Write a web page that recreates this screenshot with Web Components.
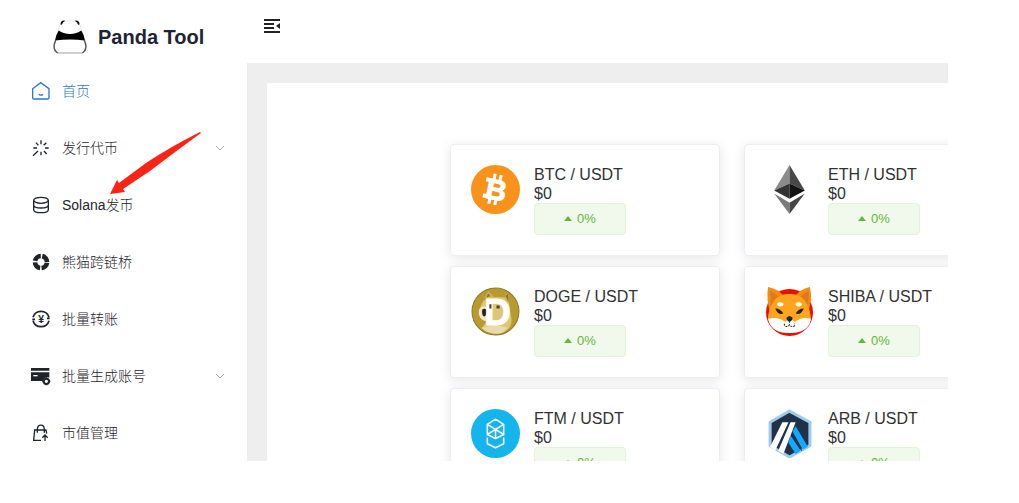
<!DOCTYPE html>
<html lang="zh-CN">

<head>
  <meta charset="utf-8">
  <title>Panda Tool</title>
  <style>
    body {
      margin: 0;
      background: #fff;
      color: #303133;
      font-family: "Liberation Sans", "Noto Sans CJK SC", sans-serif;
    }
  </style>
</head>

<body>

  <panda-app>
    <side-bar slot="side">
      <menu-item icon="home" active>首页</menu-item>
      <menu-item icon="issue" submenu>发行代币</menu-item>
      <menu-item icon="coins">Solana发币</menu-item>
      <menu-item icon="bridge">熊猫跨链桥</menu-item>
      <menu-item icon="transfer">批量转账</menu-item>
      <menu-item icon="account" submenu>批量生成账号</menu-item>
      <menu-item icon="market">市值管理</menu-item>
    </side-bar>
    <top-bar slot="top"></top-bar>
    <price-card coin="btc" pair="BTC / USDT"></price-card>
    <price-card coin="eth" pair="ETH / USDT"></price-card>
    <price-card coin="doge" pair="DOGE / USDT"></price-card>
    <price-card coin="shiba" pair="SHIBA / USDT"></price-card>
    <price-card coin="ftm" pair="FTM / USDT"></price-card>
    <price-card coin="arb" pair="ARB / USDT"></price-card>
    <pointer-arrow slot="overlay"></pointer-arrow>
  </panda-app>

  <script>

    // Menu icons, all on a 54 x 54 grid
    const menuIcons = {
      home: `<path d="M2 20 L26 2 L51 20 V47 q0 4 -4 4 H6 q-4 0 -4 -4z M20 37 q6 5 13 0"/>`,
      issue: `<path stroke-width="4" d="M27 4v12 M27 38v11 M4 27h11 M39 27h11 M12 11l7 8 M43 11l-8 8 M36 36l8 9 M18 36L3 50"/>`,
      coins: `<g stroke-width="4"><ellipse cx="27" cy="13" rx="22" ry="9"/>
        <path d="M5 13v28c0 12 44 12 44 0V13 M5 27c0 12 44 12 44 0"/></g>`,
      bridge: `<circle cx="27" cy="27" r="18" stroke-width="14" pathLength="100" stroke-dasharray="21 4" stroke-dashoffset="-2"/>`,
      transfer: `<path stroke-width="5" d="M3 22 A25 25 0 0 1 51 22 M51 32 A25 25 0 0 1 3 32 M1 28h8 M45 25h8"/>
        <text x="27" y="38" text-anchor="middle" font-size="31" font-weight="bold" fill="currentColor" stroke="none">¥</text>`,
      account: `<path fill="currentColor" stroke="none" d="M-3 3h55v8H-3z M-3 16h55v16a15 15 0 0 0-20 10H-3z"/>
        <path stroke="#fff" stroke-width="4" d="M4 26h13"/>
        <circle cx="43" cy="43" r="8" stroke-width="6"/>
        <path stroke-width="5" d="M43 31v4 M43 51v4 M31 43h4 M51 43h4"/>`,
      market: `<path stroke-width="4" d="M27 49H5 L8 18H42l2 11 M16 26v-9c0-18 21-18 21 0v9 M39 51V34 M31 41l8-8l8 8"/>`
    }

    // Coin logos, 48 x 48
    const coinLogos = {
      btc: `<circle cx="24" cy="24" r="24" fill="#f7931a"/>
        <g transform="rotate(12 24 24)" fill="#fff">
          <text x="25" y="34" text-anchor="middle" font-size="28" font-weight="bold" stroke="#fff" stroke-width="1">B</text>
          <path d="M19 9h3v7h-3z M25 9h3v7h-3z M19 32h3v7h-3z M25 32h3v7h-3z M13 14h7v4h-7z M13 30h7v4h-7z"/>
        </g>`,
      eth: `<path fill="#8b8b8b" d="M24 0L9 25l15-7z"/>
        <path fill="#484848" d="M24 0l15 25l-15-7z"/>
        <path fill="#343434" d="M24 18L9 25l15 8z"/>
        <path fill="#121212" d="M24 18l15 7l-15 8z"/>
        <path fill="#7b7b7b" d="M9 28l15 9v11z"/>
        <path fill="#454545" d="M39 28l-15 9v11z"/>`,
      doge: `<circle cx="24" cy="24" r="23" fill="#b79b2e" stroke="#8f7829" stroke-width="1"/>
        <path fill="#cdb25a" d="M13 11l4-7l6 6z M32 11l4-6l2 14z"/>
        <path fill="#92732c" d="M34 9l2-3l1 9z M15 10l2-4l2 3z"/>
        <path fill="#dcc67e" d="M12 14l5-4h15l5 6l2 12c2 7 0 12-6 16c-7 3-16 2-22-4l4-6c-7-4-8-13-3-20z"/>
        <path fill="#efe6cf" d="M8 22c3-5 8-4 9 2v9c-6 2-11-5-9-11z"/>
        <path fill="#2c2416" d="M11 22c3-2 5 0 4 4c-1 5-5 3-4-4z"/>
        <path fill="#e9dca9" d="M10 40l13-3l13 3l-6 5c-7 2-15 0-20-5z"/>
        <text x="26" y="37" text-anchor="middle" font-size="36" font-weight="bold" fill="#fffdf5" stroke="#fffdf5" stroke-width="1">D</text>
        <path fill="#4a3d22" d="M18 17h2v4h-2z M25 18h3v3h-3z"/>`,
      shiba: `<circle cx="24" cy="25" r="23" fill="#e80f05"/>
        <path fill="#f48b12" d="M3 0q11 2 16 10L5 25Q1 12 3 0z M44 0q-10 2-15 10l13 15q5-12 2-25z"/>
        <path fill="#e07a18" d="M5 4q7 3 10 8l-9 8z M43 4q-7 3-10 8l9 8z"/>
        <path fill="#ffa51d" d="M24 7c13-1 20 10 21 24c-2 11-11 14-21 14S5 42 3 31C4 17 11 6 24 7z"/>
        <path fill="#fff" d="M3 31c9-2 13 1 17 3l4-4l5 4c4-2 8-5 16-3c-1 10-10 14-21 14S5 41 3 31z"/>
        <ellipse cx="15" cy="17" rx="3" ry="2" fill="#fff"/>
        <ellipse cx="33" cy="17" rx="3" ry="2" fill="#fff"/>
        <path fill="#252321" d="M10 21q5 0 8 5q-5 2-8-5z M38 21q-5 0-8 5q5 2 8-5z M21 30q3-3 6 0q0 3-3 4q-3-1-3-4z"/>
        <path fill="none" stroke="#252321" stroke-width="1" stroke-dasharray="2 1" d="M24 33v3 M19 36v2q3 2 5-1q2 3 5 1v-2"/>`,
      ftm: `<circle cx="24" cy="24" r="24" fill="#13b5ec"/>
        <path fill="none" stroke="#fff" stroke-width="1.5" stroke-linejoin="round" d="M16 26V15l8-5l8 5v11 M16 28v6l8 4l8-4v-6 M16 15l8 5l8-5 M16 15l16 10l-8 4l-8-4l16-10 M24 20v9"/>`,
      arb: `<path fill="#213147" stroke="#9dcced" stroke-width="3" stroke-linejoin="round" d="M24 2l20 11v23L24 47L5 36V13z"/>
        <path fill="#12aaff" d="M27 22l3-5l12 20l-5 3z M25 26l10 15l-5 3l-7-11z"/>
        <path stroke="#213147" stroke-width="1" d="M26 24l10 17"/>
        <path fill="#fff" d="M17 13h6L10 41l-5-4z M25 13h5L18 44l-5-3z"/>`
    }

    class PandaApp extends HTMLElement {
      constructor() {
        super();
        this.attachShadow({ mode: "open" }).innerHTML = `
          <style>
            :host {
              display: flex;
              position: relative;
              height: calc(100vh - 42px);
              margin-right: 71px;
              overflow: hidden;
            }

            .content {
              flex: 1;
              min-width: 0;
              display: flex;
              flex-direction: column;
            }

            main {
              flex: 1;
              min-height: 0;
              padding: 20px 0 0 20px;
              background: #eee;
              overflow: hidden;
            }

            .panel {
              display: grid;
              grid-template-columns: repeat(2, 270px);
              gap: 10px 24px;
              padding: 61px 0 20px 183px;
              background: #fff;
              overflow: hidden;
            }
          </style>
          <slot name="side"></slot>
          <div class="content">
            <slot name="top"></slot>
            <main>
              <section class="panel"><slot></slot></section>
            </main>
          </div>
          <slot name="overlay"></slot>
        `;
      }
    }

    class SideBar extends HTMLElement {
      constructor() {
        super();
        this.attachShadow({ mode: "open" }).innerHTML = `
          <style>
            :host {
              display: flex;
              flex-direction: column;
              flex: none;
              width: 247px;
              overflow: hidden;
              background: #fff;
            }

            .logo {
              box-sizing: border-box;
              display: flex;
              flex: none;
              align-items: center;
              gap: 11px;
              height: 62px;
              padding: 12px 0 0 53px;
              color: #1d2433;
            }

            h1 {
              margin: 0;
              font-size: 20px;
              line-height: 24px;
            }

            nav {
              flex: none;
            }

            .more {
              flex: none;
              width: 6px;
              height: 2px;
              margin: auto 0 0 15px;
              border-radius: 3px 3px 0 0;
              background: #999;
            }
          </style>
          <div class="logo">
            <svg width="34" height="34" viewBox="0 0 100 100" aria-hidden="true">
              <path fill="#fff" stroke="#ddd" stroke-width="2" d="M24 8Q50-4 76 8Q84 24 90 50Q106 78 88 97H12Q-6 78 10 50Q16 24 24 8z"/>
              <path fill="none" stroke="#555" stroke-width="4" d="M8 60Q-4 86 14 97 M92 60Q104 86 86 97"/>
              <path fill="none" stroke="#aaa" stroke-width="3" d="M14 97H86"/>
              <path fill="#111" d="M22 13Q22 0 36 2Q29 5 26 14z M78 13Q78 0 64 2Q71 5 74 14z"/>
              <path fill="#000" d="M17 31Q30 41 50 41T83 31Q92 44 94 60Q50 55 6 60Q8 44 17 31z"/>
            </svg>
            <h1>Panda Tool</h1>
          </div>
          <nav><slot></slot></nav>
          <div class="more"></div>
        `;
      }
    }

    class MenuItem extends HTMLElement {
      constructor() {
        super();
        const submenu = this.hasAttribute("submenu");
        const tag = submenu ? `button type="button" aria-expanded="false"` : `a href="#"`;
        const chevron = `<svg class="chevron" width="10" height="6" viewBox="0 0 10 6"><path d="M1 1l4 4l4-4"/></svg>`;
        this.attachShadow({ mode: "open" }).innerHTML = `
          <style>
            :host {
              display: block;
            }

            a,
            button {
              box-sizing: border-box;
              display: flex;
              align-items: center;
              gap: 12px;
              width: 100%;
              height: 57px;
              padding: 0 22px 0 32px;
              border: 0;
              background: none;
              color: #1f242b;
              font: inherit;
              font-size: 14px;
              font-weight: 300;
              text-align: left;
              text-decoration: none;
              cursor: pointer;
            }

            :host([active]) a {
              color: #2a78d0;
            }

            span {
              padding-bottom: 2px;
            }

            svg {
              flex: none;
              fill: none;
              stroke: currentColor;
              overflow: visible;
            }

            .chevron {
              margin-left: auto;
              stroke: #aaa;
              stroke-width: 1;
            }
          </style>
          <${tag}>
            <svg width="18" height="18" viewBox="0 0 54 54" stroke-width="4" aria-hidden="true">${menuIcons[this.getAttribute("icon")]}</svg>
            <span><slot></slot></span>
            ${submenu ? chevron : ""}
          </${submenu ? "button" : "a"}>
        `;
      }
    }

    class TopBar extends HTMLElement {
      constructor() {
        super();
        this.attachShadow({ mode: "open" }).innerHTML = `
          <style>
            :host {
              box-sizing: border-box;
              display: flex;
              align-items: flex-start;
              height: 63px;
              padding: 17px 16px;
              background: #fff;
            }

            button {
              display: flex;
              padding: 0;
              border: 0;
              background: none;
              color: #222;
              cursor: pointer;
            }
          </style>
          <button type="button" aria-label="收起菜单">
            <svg width="18" height="18" viewBox="0 0 18 18" fill="currentColor">
              <path d="M1 2h16v2H1z M1 6h10v2H1z M1 10h10v2H1z M1 14h16v2H1z M17 6v6l-4-3z"/>
            </svg>
          </button>
        `;
      }
    }

    class PriceCard extends HTMLElement {
      constructor() {
        super();
        this.attachShadow({ mode: "open" }).innerHTML = `
          <style>
            :host {
              display: flex;
              align-items: flex-start;
              gap: 14px;
              padding: 20px;
              border: 1px solid #ebeef5;
              border-radius: 4px;
              background: #fff;
              box-shadow: 0 2px 12px rgba(0, 0, 0, 0.1);
            }

            svg {
              flex: none;
            }

            h2,
            p {
              margin: 0;
              font-size: 16px;
              font-weight: normal;
              line-height: 19px;
            }

            button {
              box-sizing: border-box;
              display: flex;
              align-items: center;
              justify-content: center;
              gap: 5px;
              width: 92px;
              height: 32px;
              padding: 0 0 2px;
              border: 1px solid #e1f3d8;
              border-radius: 4px;
              background: #f0f9eb;
              color: #67b53f;
              font: inherit;
              font-size: 13px;
            }
          </style>
          <svg width="49" height="49" viewBox="0 0 48 48" aria-hidden="true">${coinLogos[this.getAttribute("coin")]}</svg>
          <div>
            <h2>${this.getAttribute("pair")}</h2>
            <p>$0</p>
            <button type="button">
              <svg width="8" height="5" viewBox="0 0 8 5" fill="currentColor"><path d="M4 0l4 5H0z"/></svg>
              <span>0%</span>
            </button>
          </div>
        `;
      }
    }

    // Red arrow that points at the Solana entry
    class PointerArrow extends HTMLElement {
      constructor() {
        super();
        this.attachShadow({ mode: "open" }).innerHTML = `
          <style>
            :host {
              display: block;
              position: absolute;
              left: 110px;
              top: 131px;
              pointer-events: none;
            }

            svg {
              display: block;
            }
          </style>
          <svg width="92" height="64" viewBox="0 0 92 64" aria-hidden="true">
            <path fill="#fb2316" d="M0 63L7 49L9 52L36 32Q60 16 90 1L91 2Q66 20 40 40L13 58L15 61z"/>
          </svg>
        `;
      }
    }

    customElements.define("panda-app", PandaApp);
    customElements.define("side-bar", SideBar);
    customElements.define("menu-item", MenuItem);
    customElements.define("top-bar", TopBar);
    customElements.define("price-card", PriceCard);
    customElements.define("pointer-arrow", PointerArrow);
  </script>

</body>

</html>
